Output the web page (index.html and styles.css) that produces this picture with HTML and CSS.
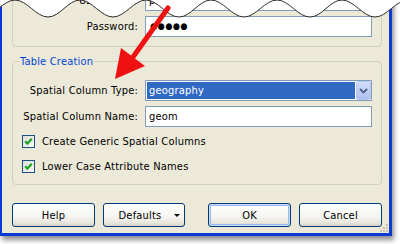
FILE: index.html
```
<html>
<head>
<title>Table Creation</title>
<link rel="stylesheet" href="styles.css">
</head>
<body>

<div class="shot">

  <div class="window">

    <div class="group group-login">
      <div class="form-row">
        <span class="label">User name:</span>
        <div class="field">postgres</div>
      </div>
      <div class="form-row">
        <span class="label">Password:</span>
        <div class="field password">&#9679;&#9679;&#9679;&#9679;&#9679;</div>
      </div>
    </div>

    <div class="group group-table">
      <div class="group-title">Table Creation</div>

      <div class="form-row first">
        <span class="label">Spatial Column Type:</span>
        <div class="combo">
          <span class="combo-value">geography</span>
          <span class="combo-button">
            <svg width="9" height="6" viewBox="0 0 9 6"><path d="M1 1 L4.5 4.5 L8 1" fill="none" stroke="#4d6185" stroke-width="1.8"/></svg>
          </span>
        </div>
      </div>

      <div class="form-row">
        <span class="label">Spatial Column Name:</span>
        <div class="field">geom</div>
      </div>

      <div class="check-row">
        <span class="checkbox">
          <svg width="11" height="11" viewBox="0 0 11 11"><path d="M2.2 5.2 L4.4 7.6 L8.8 2.8" fill="none" stroke="#21a121" stroke-width="2.2"/></svg>
        </span>
        Create Generic Spatial Columns
      </div>

      <div class="check-row">
        <span class="checkbox">
          <svg width="11" height="11" viewBox="0 0 11 11"><path d="M2.2 5.2 L4.4 7.6 L8.8 2.8" fill="none" stroke="#21a121" stroke-width="2.2"/></svg>
        </span>
        Lower Case Attribute Names
      </div>
    </div>

    <div class="button-bar">
      <div class="button-group">
        <div class="button">Help</div>
        <div class="button split"><span class="button-text">Defaults</span><span class="caret"></span></div>
      </div>
      <div class="button-group">
        <div class="button default">OK</div>
        <div class="button">Cancel</div>
      </div>
    </div>

    <svg class="grip" width="9" height="9" viewBox="0 0 9 9">
      <rect x="6" y="0" width="2" height="2" fill="#c8c4b4"/>
      <rect x="3" y="3" width="2" height="2" fill="#c8c4b4"/>
      <rect x="6" y="3" width="2" height="2" fill="#c8c4b4"/>
      <rect x="0" y="6" width="2" height="2" fill="#c8c4b4"/>
      <rect x="3" y="6" width="2" height="2" fill="#c8c4b4"/>
      <rect x="6" y="6" width="2" height="2" fill="#c8c4b4"/>
    </svg>

  </div>

  <!-- torn top edge of the screenshot -->
  <svg class="torn" width="400" height="24" viewBox="0 0 400 24">
    <path fill="#fff" d="M -18 17 C -6 17, 3 0, 15 0 S 36 17, 48 17 S 68 0, 80 0 S 101 17, 113 17 S 134 0, 146 0 S 167 17, 179 17 S 199 0, 211 0 S 232 17, 244 17 S 265 0, 277 0 S 298 17, 310 17 S 330 0, 342 0 S 363 17, 375 17 S 396 0, 408 0 L 408 -2 L -18 -2 Z"/>
    <path fill="none" stroke="#2a2a2a" stroke-width="1" d="M -18 17 C -6 17, 3 0, 15 0 S 36 17, 48 17 S 68 0, 80 0 S 101 17, 113 17 S 134 0, 146 0 S 167 17, 179 17 S 199 0, 211 0 S 232 17, 244 17 S 265 0, 277 0 S 298 17, 310 17 S 330 0, 342 0 S 363 17, 375 17 S 396 0, 408 0"/>
  </svg>

  <!-- callout arrow -->
  <svg class="arrow" width="400" height="100" viewBox="0 0 400 100">
    <line x1="168" y1="8" x2="133" y2="57" stroke="#ee1111" stroke-width="5" stroke-linecap="round"/>
    <polygon points="121,48 145,66 115,79" fill="#ee1111"/>
  </svg>

</div>

</body>
</html>
```

FILE: styles.css
```
body {
   margin: 0;
   background: #fff;
   font-family: "DejaVu Sans Condensed", "DejaVu Sans", sans-serif;
   font-size: 11px;
   letter-spacing: 0.2px; }

.shot {
   position: relative;
   width: 400px;
   height: 244px;
   overflow: hidden;
   background: #fff; }

.window {
   position: relative;
   box-sizing: border-box;
   width: 392px;
   margin-top: -20px;
   padding: 6px 7px 6px 10px;
   background: #ece9d8;
   border-left: 2px solid #0b3bd6;
   border-right: 3px solid #0b3bd6;
   border-bottom: 3px solid #0b3bd6;
   box-shadow: 2px 4px 5px rgba(0, 0, 0, 0.45);
   display: flex;
   flex-direction: column; }

.group {
   position: relative;
   border: 1px solid #d0d0bf;
   border-radius: 4px;
   padding-right: 9px;
   display: flex;
   flex-direction: column; }

.group-login {
   padding-top: 3px;
   padding-bottom: 9px;
   gap: 5px; }

.group-table {
   margin-top: 14px;
   padding-top: 18px;
   padding-bottom: 7px;
   gap: 4px; }

.group-title {
   position: absolute;
   top: -7px;
   left: 6px;
   padding: 0 1px;
   line-height: 13px;
   color: #0046d5;
   background: #ece9d8; }

.form-row {
   display: grid;
   grid-template-columns: 125px 227px;
   column-gap: 7px;
   height: 21px;
   align-items: center; }

.form-row.first {
   margin-bottom: 1px; }

.label {
   text-align: right;
   color: #000; }

.field {
   box-sizing: border-box;
   height: 21px;
   padding-left: 3px;
   border: 1px solid #7f9db9;
   background: #fff;
   line-height: 19px;
   color: #000; }

.password {
   padding-left: 4px;
   font-size: 9px;
   letter-spacing: 0.5px; }

.combo {
   box-sizing: border-box;
   height: 21px;
   padding: 1px;
   border: 1px solid #7f9db9;
   background: #fff;
   display: flex; }

.combo-value {
   flex: 1;
   padding-left: 2px;
   line-height: 17px;
   color: #fff;
   background: #316ac5; }

.combo-button {
   box-sizing: border-box;
   width: 15px;
   margin: -1px -1px -1px 1px;
   border: 1px solid #b9c9ef;
   border-radius: 2px;
   background: linear-gradient(#d2dffb, #bccdf6 60%, #aebff0);
   display: flex;
   align-items: center;
   justify-content: center; }

.check-row {
   height: 21px;
   margin-left: 9px;
   display: flex;
   align-items: center;
   gap: 7px;
   color: #000; }

.checkbox {
   box-sizing: border-box;
   width: 13px;
   height: 13px;
   border: 1px solid #1c5180;
   background: linear-gradient(135deg, #dcdcd7, #fbfbf9);
   display: flex;
   align-items: center;
   justify-content: center; }

.button-bar {
   margin-top: 18px;
   display: flex;
   justify-content: space-between; }

.button-group {
   display: flex;
   gap: 8px; }

.button {
   box-sizing: border-box;
   width: 83px;
   height: 24px;
   border: 1px solid #003c74;
   border-radius: 3px;
   background: linear-gradient(#ffffff, #f6f6f3 55%, #e8e6dd 85%, #d6d0c5);
   display: flex;
   align-items: center;
   justify-content: center;
   color: #000; }

.button.split {
   width: 82px; }

.button-text {
   flex: 1;
   padding-left: 2px;
   text-align: center; }

.caret {
   width: 0;
   height: 0;
   margin-right: 4px;
   border-left: 3px solid transparent;
   border-right: 3px solid transparent;
   border-top: 3px solid #000; }

.button.default {
   box-shadow: inset 0 0 0 1px #c9dbf8, inset 0 0 0 2px #9db7ec; }

.grip {
   position: absolute;
   right: 0;
   bottom: 0; }

.torn {
   position: absolute;
   top: 0;
   left: 0; }

.arrow {
   position: absolute;
   top: 0;
   left: 0; }
```
